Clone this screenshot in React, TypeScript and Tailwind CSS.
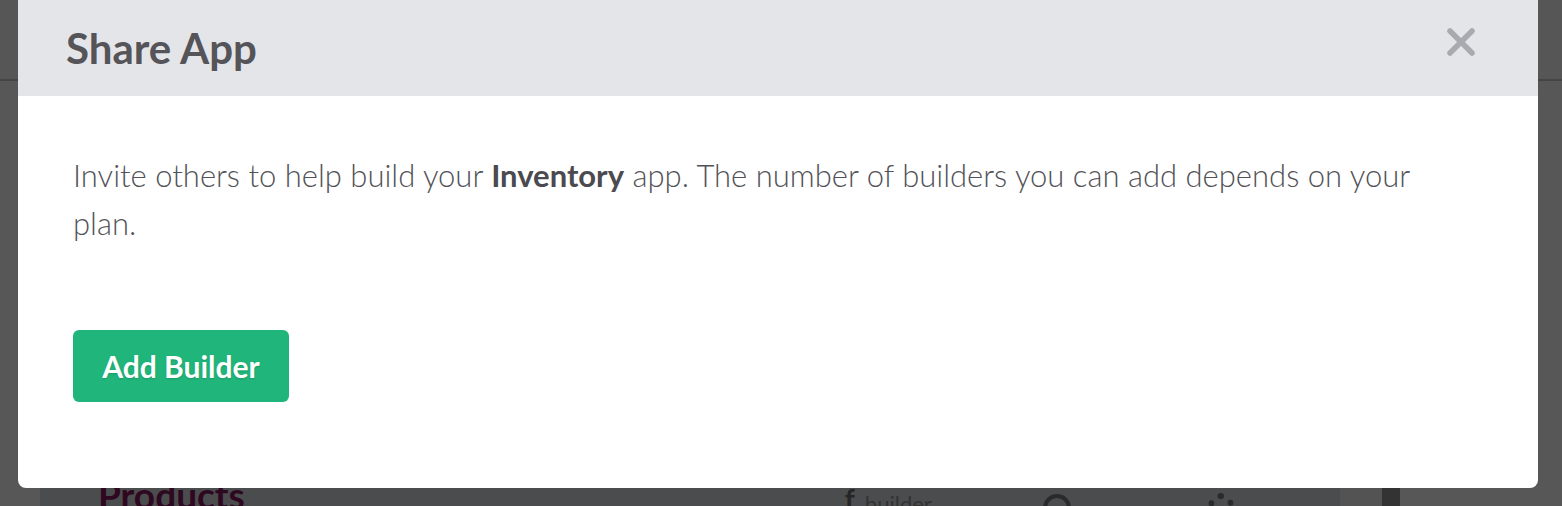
import React from 'react';

const font = { fontFamily: 'Lato, "Open Sans", sans-serif' };

const CloseIcon = () => (
  <svg width="30" height="30" viewBox="0 0 30 30" fill="none">
    <path d="M4 4L26 26M26 4L4 26" stroke="#a9aab0" strokeWidth="5.5" strokeLinecap="round" />
  </svg>
);

const App: React.FC = () => {
  return (
    <div className="relative w-[1562px] h-[506px] overflow-hidden bg-[#565656]" style={font}>
      {/* dimmed page underneath */}
      <div className="flex flex-col h-full">
        <div className="h-[81px] border-b-2 border-[#454545] shrink-0" />
        <div className="flex flex-1">
          <div className="w-[40px] bg-[#575757]" />
          <div className="w-[1300px] bg-[#4b4c4d] relative">
            <div className="absolute top-[395px] left-[58px] text-[37px] font-bold text-[#2e0820] leading-none">Products</div>
            <div className="absolute top-[404px] left-[805px] flex items-start gap-[10px] text-[#262626]">
              <span className="text-[28px] font-bold leading-none">ƒ</span>
              <span className="text-[22px] text-[#333] leading-none mt-[8px]">builder</span>
            </div>
            <div className="absolute top-[413px] left-[1003px] w-[28px] h-[28px] rounded-full border-[4px] border-[#2a2a2a]" />
            <div className="absolute top-[412px] left-[1168px] w-[26px] h-[26px] rounded-full border-[6px] border-dotted border-[#2a2a2a]" />
          </div>
          <div className="w-[42px] bg-[#535353]" />
          <div className="w-[18px] bg-[#333333]" />
          <div className="flex-1 bg-[#575757]" />
        </div>
      </div>

      {/* modal */}
      <div className="absolute left-[18px] top-0 w-[1520px] h-[488px] bg-white rounded-b-[8px] overflow-hidden flex flex-col">
        <div className="h-[96px] bg-[#e4e5e9] flex items-start justify-between pl-[48px] pr-[62px] shrink-0">
          <h2 className="mt-[27px] text-[42px] font-bold text-[#545459] leading-none">Share App</h2>
          <button className="mt-[27px]"><CloseIcon /></button>
        </div>
        <div className="pl-[55px] pr-[90px] pt-[55px]">
          <p className="text-[31px] font-light leading-[48px] text-[#525257]">
            Invite others to help build your <strong className="font-bold text-[#4a4a4f]">Inventory</strong> app. The number of builders you can add depends on your plan.
          </p>
          <button className="mt-[83px] w-[216px] h-[72px] rounded-[6px] bg-[#20b57a] text-white text-[30px] font-bold [text-shadow:0_1px_2px_rgba(0,0,0,0.15)]">
            Add Builder
          </button>
        </div>
      </div>
    </div>
  );
};

export default App;
